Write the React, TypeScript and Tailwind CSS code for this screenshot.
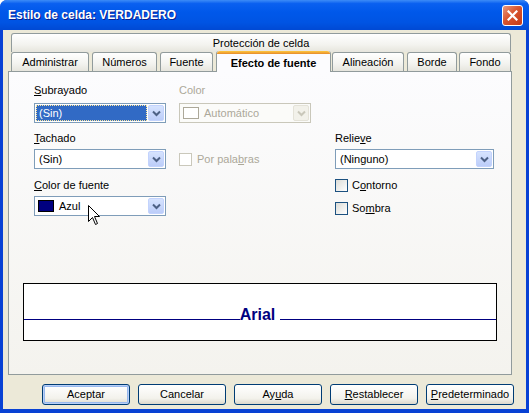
import React from "react";

const font = { fontFamily: '"Liberation Sans", Arial, sans-serif' };

function Chevron({ disabled }: { disabled?: boolean }) {
  return (
    <svg width="9" height="7" viewBox="0 0 9 7">
      <path d="M1 1.5 L4.5 5 L8 1.5" fill="none" stroke={disabled ? "#c9c7ba" : "#4d6185"} strokeWidth="2" />
    </svg>
  );
}

function Select({
  children,
  disabled,
  className = "",
}: {
  children: React.ReactNode;
  disabled?: boolean;
  className?: string;
}) {
  return (
    <div
      className={`flex h-[20px] items-center border p-px ${
        disabled ? "border-[#c9c7ba] bg-[#fbfbf9]" : "border-[#7f9db9] bg-white"
      } ${className}`}
    >
      <div className="flex h-full min-w-0 flex-1 items-center">{children}</div>
      <div
        className={`ml-px flex h-[16px] w-[16px] items-center justify-center rounded-[2px] border ${
          disabled
            ? "border-[#e4e2d8] bg-[#f2f1ea]"
            : "border-[#c3d3fd] bg-[linear-gradient(to_bottom,#d6e3fe,#bccdf9)]"
        }`}
      >
        <Chevron disabled={disabled} />
      </div>
    </div>
  );
}

function Checkbox({ disabled }: { disabled?: boolean }) {
  return (
    <div
      className={`h-[13px] w-[13px] shrink-0 border ${
        disabled
          ? "border-[#cac8bb] bg-white"
          : "border-[#1c5180] bg-[linear-gradient(135deg,#dcdcd7,#ffffff)]"
      }`}
    />
  );
}

function Button({ children, def }: { children: React.ReactNode; def?: boolean }) {
  return (
    <div
      className={`flex h-[21px] w-[88px] items-center justify-center rounded-[3px] border border-[#003c74] bg-[linear-gradient(to_bottom,#ffffff,#f3f2ec_70%,#dcd8cc)] text-[11px] text-black ${
        def ? "shadow-[inset_0_0_0_1px_#b8cff6,inset_0_0_0_2px_#97b8ee]" : ""
      }`}
    >
      {children}
    </div>
  );
}

function Tab({ children, className = "" }: { children: React.ReactNode; className?: string }) {
  return (
    <div
      className={`flex h-[19px] items-center justify-center rounded-t-[3px] border border-b-0 border-[#919b9c] bg-[linear-gradient(to_bottom,#ffffff,#f3f3ef_60%,#e6e5dd)] text-[11px] text-black ${className}`}
    >
      {children}
    </div>
  );
}

export default function App() {
  return (
    <div style={font} className="relative h-[413px] w-[529px] bg-white">
      <div className="flex h-[413px] w-[529px] flex-col rounded-t-[7px] bg-[#0841d4]">
        {/* Title bar */}
        <div className="flex h-[30px] shrink-0 items-center rounded-t-[7px] bg-[linear-gradient(to_bottom,#3d8cf7_0%,#0a60f0_12%,#0058ea_40%,#0054e3_75%,#0049d4_100%)] pl-[8px] pr-[6px]">
          <div className="flex-1 text-[12px] font-bold text-white [text-shadow:1px_1px_#0a1e8c]">
            Estilo de celda: VERDADERO
          </div>
          <div className="flex h-[21px] w-[21px] items-center justify-center rounded-[3px] border border-white bg-[linear-gradient(135deg,#e79a80,#d9552f_45%,#c43a17)]">
            <svg width="11" height="11" viewBox="0 0 11 11">
              <path d="M1.5 1.5 L9.5 9.5 M9.5 1.5 L1.5 9.5" stroke="white" strokeWidth="2.2" strokeLinecap="square" />
            </svg>
          </div>
        </div>

        {/* Body */}
        <div className="mx-[3px] mb-[4px] flex flex-1 flex-col bg-[#ece9d8] pl-[5px] pt-[3px]">
          <div className="w-[504px]">
            {/* Upper tab row */}
            <Tab className="ml-[3px] h-[18px] w-[500px]">Protección de celda</Tab>
            {/* Lower tab row */}
            <div className="flex h-[19px] items-end">
              <Tab className="ml-[3px] w-[78px]">Administrar</Tab>
              <Tab className="ml-[3px] w-[65px]">Números</Tab>
              <Tab className="ml-[3px] w-[53px]">Fuente</Tab>
              <div className="relative z-10 mb-[-1px] ml-[3px] flex h-[21px] w-[115px] flex-col rounded-t-[3px] border-x border-[#919b9c] bg-[#fcfcfe]">
                <div className="h-[3px] rounded-t-[3px] bg-[linear-gradient(to_bottom,#ffc83c,#e68b2c)]" />
                <div className="flex flex-1 items-center justify-center text-[11px] font-bold text-black">
                  Efecto de fuente
                </div>
              </div>
              <Tab className="ml-px w-[72px]">Alineación</Tab>
              <Tab className="ml-[3px] w-[50px]">Borde</Tab>
              <Tab className="ml-[2px] w-[52px]">Fondo</Tab>
            </div>
            {/* Panel */}
            <div className="flex h-[304px] flex-col border border-[#919b9c] bg-[linear-gradient(to_bottom,#fcfcfe,#f4f3ee)]">
              <div className="flex pl-[25px] pt-[12px] text-[11px] text-black">
                {/* col 1 */}
                <div className="flex w-[132px] flex-col">
                  <div className="h-[13px] leading-[13px]">
                    <span className="underline">S</span>ubrayado
                  </div>
                  <Select className="mt-[6px]">
                    <div className="flex h-[16px] w-full items-center border border-dotted border-[#ffe79a] bg-[#316ac5] pl-[2px] text-white">
                      (Sin)
                    </div>
                  </Select>
                  <div className="mt-[9px] h-[13px] leading-[13px]">
                    <span className="underline">T</span>achado
                  </div>
                  <Select className="mt-[4px]">
                    <span className="pl-[3px]">(Sin)</span>
                  </Select>
                  <div className="mt-[10px] h-[13px] leading-[13px]">
                    <span className="underline">C</span>olor de fuente
                  </div>
                  <Select className="mt-[4px]">
                    <div className="ml-[2px] h-[12px] w-[16px] border border-black bg-[#000080]" />
                    <span className="pl-[5px]">Azul</span>
                  </Select>
                </div>
                {/* col 2 */}
                <div className="ml-[13px] flex w-[132px] flex-col text-[#aca899]">
                  <div className="h-[13px] leading-[13px]">Color</div>
                  <Select className="mt-[6px]" disabled>
                    <div className="ml-[2px] h-[12px] w-[16px] border border-[#aca899] bg-white" />
                    <span className="pl-[5px]">Automático</span>
                  </Select>
                  <div className="mt-[28px] flex items-center gap-[5px]">
                    <Checkbox disabled />
                    <span>
                      Por pala<span className="underline">b</span>ras
                    </span>
                  </div>
                </div>
                {/* col 3 */}
                <div className="ml-[24px] flex w-[159px] flex-col">
                  <div className="mt-[48px] h-[13px] leading-[13px]">
                    Relie<span className="underline">v</span>e
                  </div>
                  <Select className="mt-[4px]">
                    <span className="pl-[3px]">(Ninguno)</span>
                  </Select>
                  <div className="mt-[10px] flex h-[13px] items-center gap-[4px]">
                    <Checkbox />
                    <span>
                      C<span className="underline">o</span>ntorno
                    </span>
                  </div>
                  <div className="mt-[10px] flex h-[13px] items-center gap-[4px]">
                    <Checkbox />
                    <span>
                      So<span className="underline">m</span>bra
                    </span>
                  </div>
                </div>
              </div>
              {/* Preview */}
              <div className="mx-[14px] mt-[67px] h-[58px] border border-black bg-white pt-[22px]">
                <div className="flex items-baseline">
                  <div className="h-px flex-1 bg-[#000080]" />
                  <span className="pr-[5px] text-[16px] font-bold leading-[18px] text-[#000080]">Arial</span>
                  <div className="h-px flex-1 bg-[#000080]" />
                </div>
              </div>
            </div>
          </div>
          {/* Buttons */}
          <div className="mt-[9px] flex justify-end gap-[8px] pr-[12px]">
            <Button def>Aceptar</Button>
            <Button>Cancelar</Button>
            <Button>
              Ay<span className="underline">u</span>da
            </Button>
            <Button>
              <span className="underline">R</span>establecer
            </Button>
            <Button>
              <span className="underline">P</span>redeterminado
            </Button>
          </div>
        </div>
      </div>
      {/* Mouse cursor */}
      <svg className="absolute left-[88px] top-[205px]" width="13" height="21" viewBox="0 0 13 21">
        <path
          d="M0.5 0.5 L0.5 16.5 L4.5 12.5 L7.5 19.5 L9.5 18.5 L6.5 11.5 L11.5 11.5 Z"
          fill="white"
          stroke="black"
          strokeWidth="1"
          strokeLinejoin="miter"
        />
      </svg>
    </div>
  );
}
